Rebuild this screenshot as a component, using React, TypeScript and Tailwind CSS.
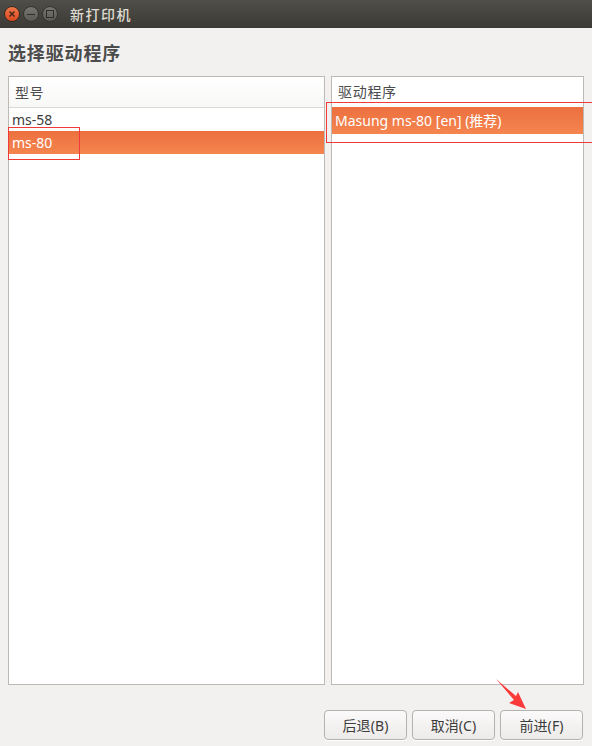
const FONT = "font-['Noto_Sans','Noto_Sans_CJK_SC',sans-serif]";

function WindowButton({ children, close }: { children: React.ReactNode; close?: boolean }) {
  return (
    <div
      className={
        close
          ? "flex h-[16px] w-[16px] items-center justify-center rounded-full border border-[#3a2a22] bg-gradient-to-b from-[#f0774a] to-[#d9481c]"
          : "flex h-[16px] w-[16px] items-center justify-center rounded-full border border-[#35342f] bg-gradient-to-b from-[#77766f] to-[#5b5a54]"
      }
    >
      {children}
    </div>
  );
}

function ActionButton({ label }: { label: string }) {
  return (
    <button
      type="button"
      className="h-[30px] w-[83px] rounded-[4px] border border-[#b5b2ad] bg-gradient-to-b from-[#fbfafa] to-[#edebe9] text-[14px] tracking-[0.1px] text-[#3c3c3c] shadow-[0_1px_0_#ffffff]"
    >
      {label}
    </button>
  );
}

export default function App() {
  return (
    <div className={`${FONT} relative flex h-[746px] w-[592px] flex-col overflow-hidden bg-[#f2f1f0]`}>
      {/* title bar */}
      <div className="flex h-[28px] shrink-0 items-center bg-gradient-to-b from-[#4f4e48] to-[#3b3a35] pl-[4px]">
        <div className="flex items-center gap-[3px]">
          <WindowButton close>
            <svg width="8" height="8" viewBox="0 0 8 8" stroke="#41241a" strokeWidth="1.4">
              <path d="M1.5 1.5l5 5M6.5 1.5l-5 5" />
            </svg>
          </WindowButton>
          <WindowButton>
            <div className="h-[1px] w-[8px] bg-[#2f2e2a]" />
          </WindowButton>
          <WindowButton>
            <div className="h-[8px] w-[8px] border border-[#2f2e2a]" />
          </WindowButton>
        </div>
        <span className="ml-[12px] pt-[2px] text-[14px] font-medium leading-none tracking-[1.5px] text-[#dfdbd2]">新打印机</span>
      </div>

      {/* heading */}
      <div className="flex h-[48px] shrink-0 items-center pl-[8px] pt-[2px] text-[18px] font-bold tracking-[0.85px] text-[#4c4c4c]">
        选择驱动程序
      </div>

      {/* lists */}
      <div className="flex h-[609px] shrink-0 gap-[6px] pl-[8px]">
        <div className="flex h-full w-[317px] flex-col border border-[#bdbab5] bg-white">
          <div className="flex h-[31px] shrink-0 items-center border-b border-[#dcdad7] bg-gradient-to-b from-white to-[#f8f8f7] pl-[6px] text-[14px] tracking-[0.6px] text-[#4c4c4c]">
            型号
          </div>
          <div className="flex h-[23px] items-center pl-[3px] text-[14px] text-[#3c3c3c]">ms-58</div>
          <div className="flex h-[23px] items-center bg-gradient-to-b from-[#ec703f] to-[#f5854f] pl-[3px] text-[14px] text-white">
            ms-80
          </div>
        </div>
        <div className="flex h-full w-[253px] flex-col border border-[#bdbab5] bg-white">
          <div className="flex h-[30px] shrink-0 items-center pb-[1px] pl-[6px] text-[14px] tracking-[0.7px] text-[#4c4c4c]">驱动程序</div>
          <div className="flex h-[27px] items-center bg-gradient-to-b from-[#ec703f] to-[#f5854f] pl-[3px] text-[14px] text-white">
            Masung ms-80 [en] (推荐)
          </div>
        </div>
      </div>

      {/* actions */}
      <div className="flex flex-1 items-start justify-end gap-[5px] pr-[9px] pt-[25px]">
        <ActionButton label="后退(B)" />
        <ActionButton label="取消(C)" />
        <ActionButton label="前进(F)" />
      </div>

      {/* annotations drawn on the screenshot */}
      <div className="absolute left-[8px] top-[127px] h-[33px] w-[72px] border border-[#f03a3a]" />
      <div className="absolute left-[326px] top-[102px] h-[41px] w-[270px] border border-[#f03a3a]" />
      <svg className="absolute left-[490px] top-[672px]" width="48" height="44" viewBox="0 0 48 44">
        <path d="M6 7 L26 24 L28 20 L36 37 L19 31 L24 28 Z" fill="#fb3a3a" />
      </svg>
    </div>
  );
}
